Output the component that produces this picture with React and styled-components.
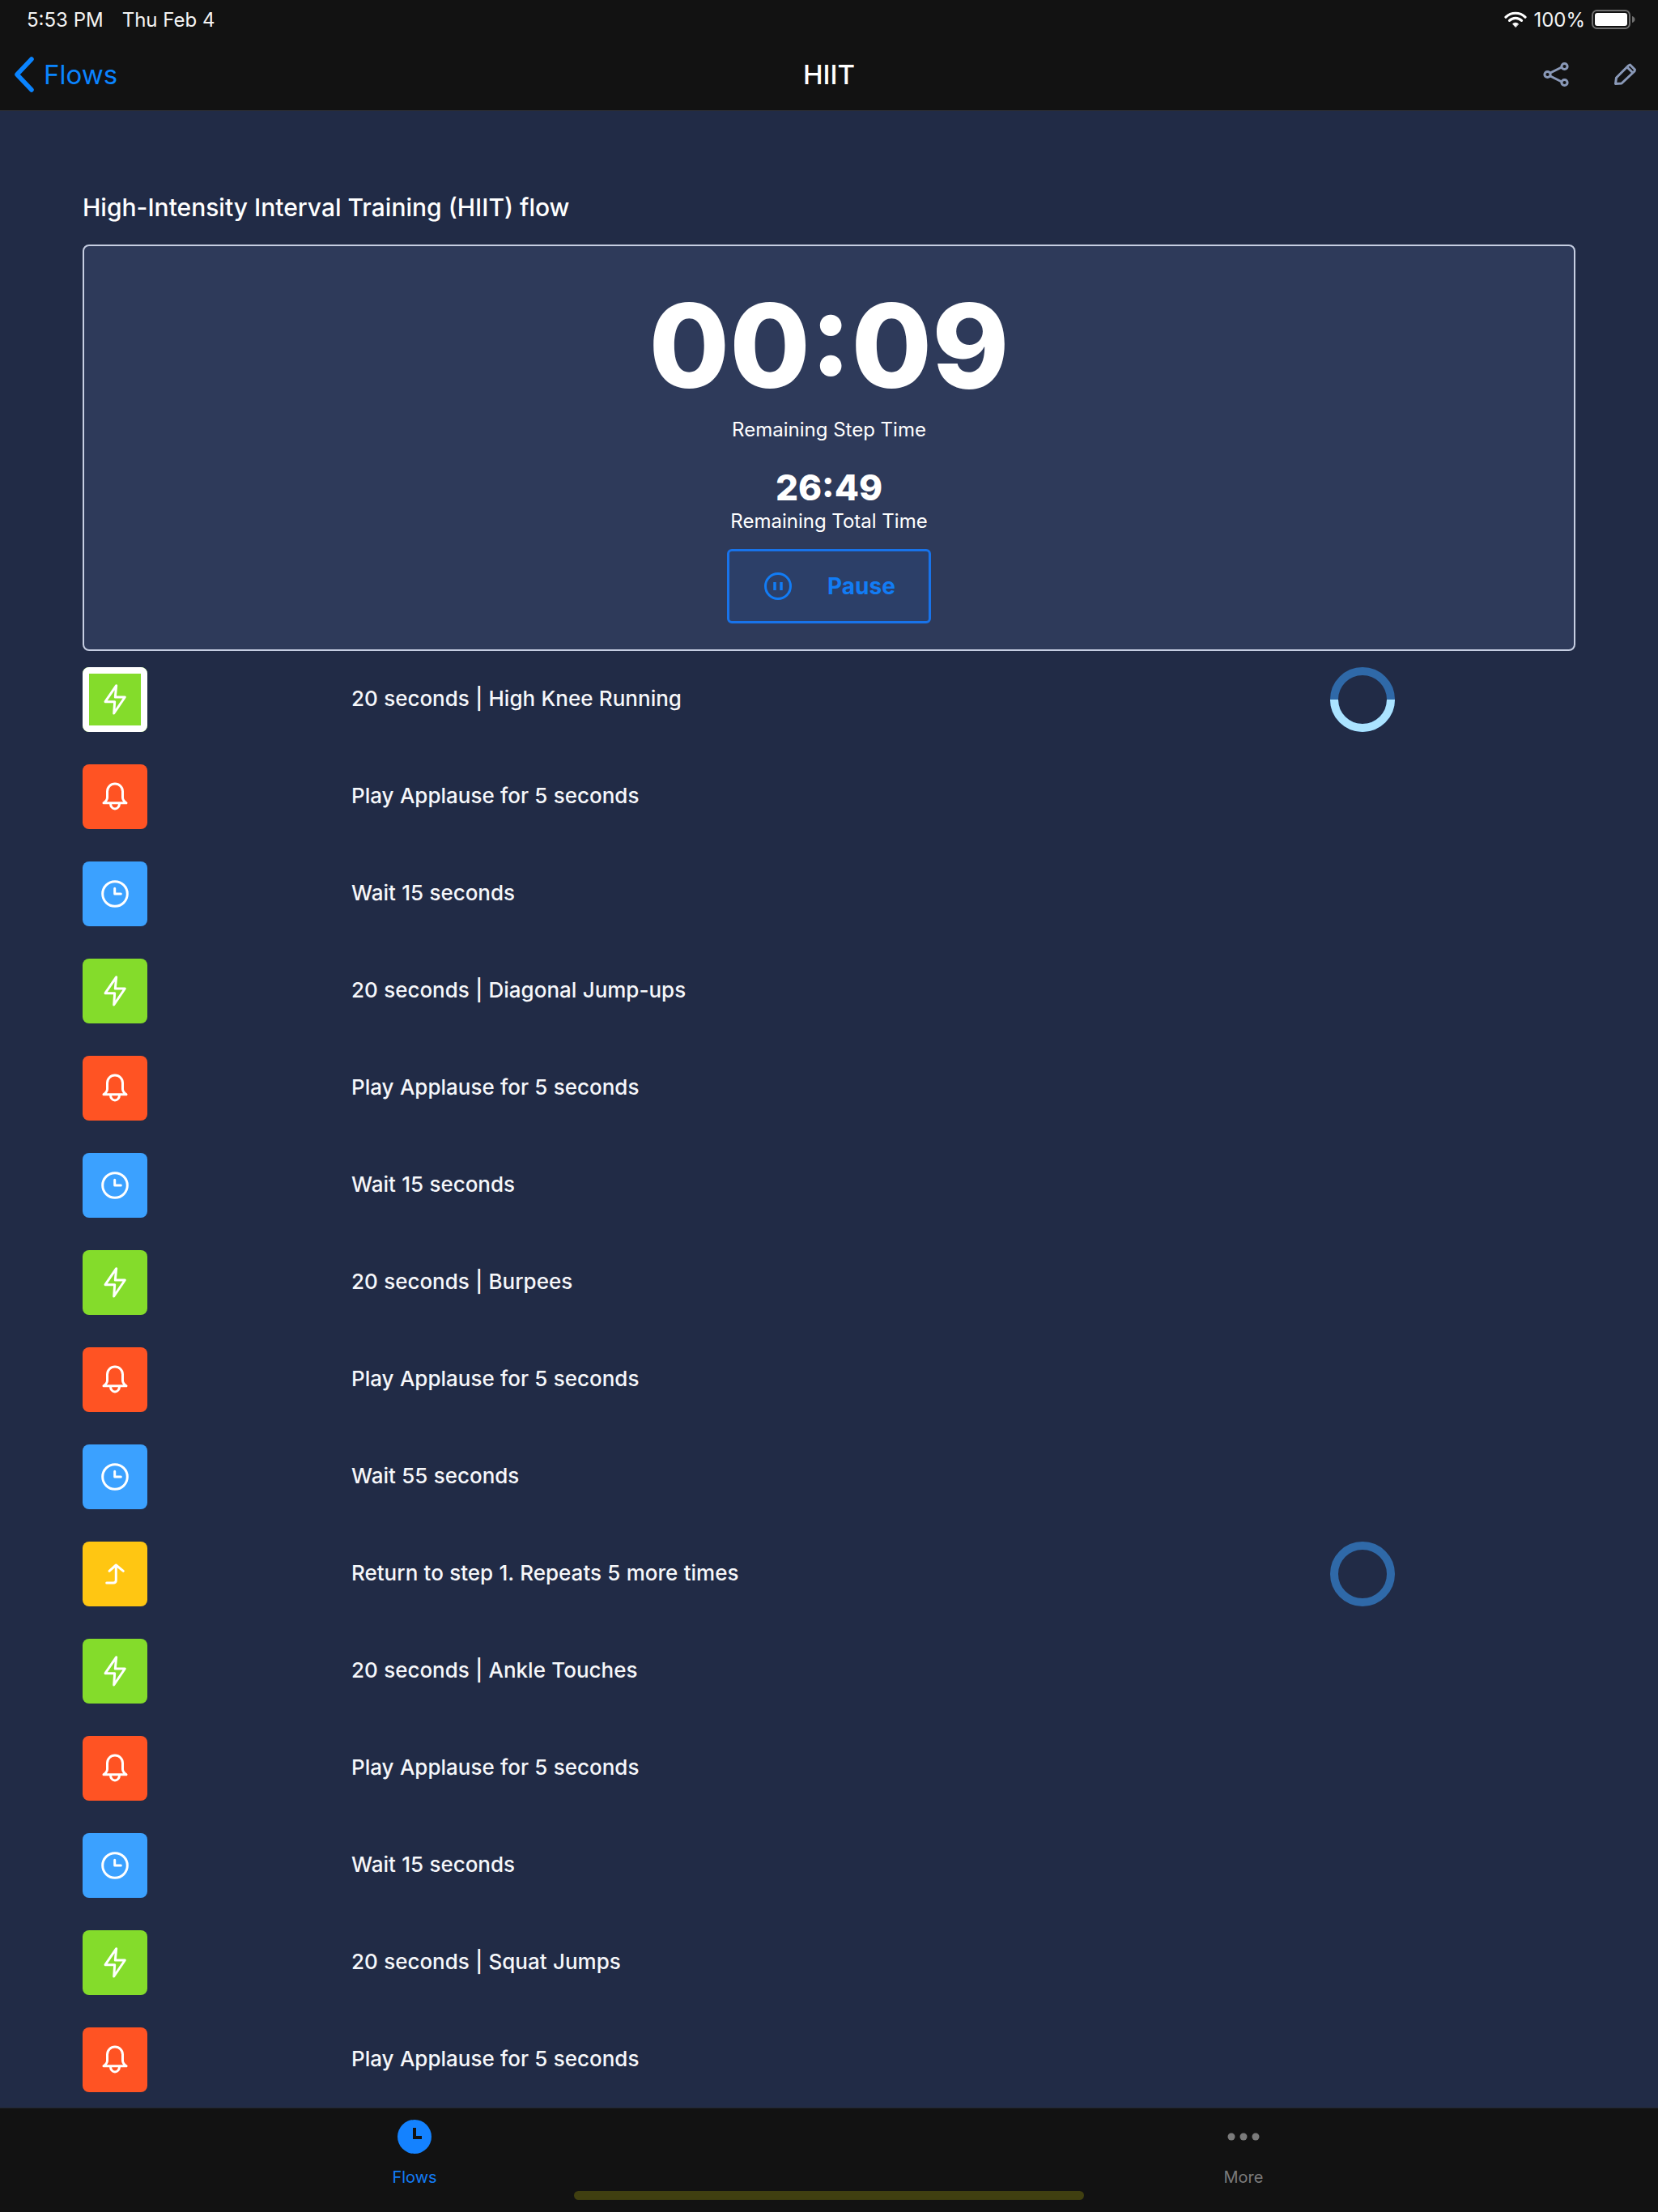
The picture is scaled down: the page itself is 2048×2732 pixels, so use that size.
import React from 'react';
import styled, {createGlobalStyle} from 'styled-components';

const GlobalStyle = createGlobalStyle`
  html, body {
    margin: 0;
    padding: 0;
    background: #121212;
  }
  * {
    box-sizing: border-box;
  }
`;

const Screen = styled.div`
  width: 2048px;
  height: 2732px;
  display: flex;
  flex-direction: column;
  overflow: hidden;
  position: relative;
  background: #212b46;
  color: #fff;
  font-family: Inter, "Liberation Sans", sans-serif;
`;

const Header = styled.header`
  height: 137px;
  flex: none;
  background: #121212;
  border-bottom: 1px solid #2a2c32;
`;

const StatusBar = styled.div`
  height: 48px;
  padding: 0 28px 0 33px;
  display: flex;
  align-items: center;
  justify-content: space-between;
  font-size: 24px;
  color: #f4f4f4;
`;

const StatusGroup = styled.div`
  display: flex;
  align-items: center;
  gap: ${p => p.$gap}px;
`;

const NavBar = styled.nav`
  height: 88px;
  padding: 0 25px;
  display: grid;
  grid-template-columns: 1fr auto 1fr;
  align-items: center;
`;

const BackLink = styled.div`
  display: flex;
  align-items: center;
  gap: 11px;
  margin-left: -8px;
  color: #0a84ff;
  font-size: 33px;
`;

const NavTitle = styled.div`
  font-size: 33px;
  font-weight: 500;
`;

const NavActions = styled.div`
  display: flex;
  justify-content: flex-end;
  align-items: center;
  gap: 53px;
`;

const Main = styled.main`
  flex: 1;
  min-height: 0;
  overflow: hidden;
  padding: 100px 102px 0;
`;

const FlowTitle = styled.h1`
  margin: 0 0 27px;
  font-size: 30px;
  line-height: 38px;
  font-weight: 500;
`;

const TimerCard = styled.section`
  height: 502px;
  padding-top: 53px;
  display: flex;
  flex-direction: column;
  align-items: center;
  background: #2e3a5a;
  border: 2px solid #c6cee2;
  border-radius: 8px;
`;

const StepTime = styled.div`
  font-size: 144px;
  line-height: 140px;
  font-weight: 800;
`;

const TimerLabel = styled.div`
  font-size: 24px;
  line-height: 30px;
  margin-top: ${p => p.$top || 0}px;
`;

const TotalTime = styled.div`
  margin-top: 31px;
  font-size: 44px;
  line-height: 50px;
  font-weight: 800;
`;

const PauseButton = styled.button`
  width: 252px;
  height: 92px;
  margin-top: 19px;
  padding: 0 0 0 42px;
  display: flex;
  align-items: center;
  gap: 43px;
  background: #2c3f68;
  border: 3px solid #1873ea;
  border-radius: 6px;
  color: #127cf5;
  font-family: inherit;
  font-size: 28px;
  font-weight: 700;
`;

const StepRow = styled.div`
  height: 120px;
  display: grid;
  grid-template-columns: 332px 1fr 303px;
  align-items: center;
`;

const StepTile = styled.div`
  width: 80px;
  height: 80px;
  display: flex;
  align-items: center;
  justify-content: center;
  background: ${p => p.$color};
  border-radius: 8px;
  ${p => p.$active && 'outline: 8px solid #fff; outline-offset: -8px;'}
`;

const StepText = styled.div`
  padding-bottom: 3px;
  font-size: 26px;
  font-weight: 500;
  word-spacing: 0.4px;
  color: #f6f7fa;
`;

const TabBar = styled.footer`
  height: 129px;
  flex: none;
  display: grid;
  grid-template-columns: 1fr 1fr;
  padding-top: 14px;
  background: #121212;
  border-top: 1px solid #24262c;
`;

const TabItem = styled.div`
  display: flex;
  flex-direction: column;
  align-items: center;
  color: ${p => p.$color};
  font-size: 20px;
  line-height: 24px;
`;

const TabIcon = styled.div`
  height: 42px;
  margin-bottom: 17px;
  display: flex;
  align-items: center;
`;

const HomeIndicator = styled.div`
  position: absolute;
  left: 709px;
  bottom: 15px;
  width: 630px;
  height: 11px;
  background: #403f10;
  border-radius: 6px;
`;

const WifiIcon = () => (
  <svg width="28" height="22" viewBox="0 0 28 22" fill="none" stroke="#fff" strokeWidth="3.2" strokeLinecap="round">
    <path d="M2 8.2a17 17 0 0 1 24 0" />
    <path d="M6.5 12.4a10.6 10.6 0 0 1 15 0" />
    <path d="M14 20.5l-3.6-3.9a5 5 0 0 1 7.2 0z" fill="#fff" strokeWidth="0.6" strokeLinejoin="round" />
  </svg>
);

const BatteryIcon = () => (
  <svg width="54" height="24" viewBox="0 0 54 24">
    <rect x="1" y="1" width="46" height="22" rx="5.5" fill="none" stroke="#6f6f6f" strokeWidth="2" />
    <rect x="4" y="4" width="40" height="16" rx="3" fill="#fff" />
    <path d="M50 8c2 .4 3.5 2 3.5 4s-1.500 3.600-3.500 4z" fill="#6f6f6f" />
  </svg>
);

const ChevronLeft = () => (
  <svg width="26" height="44" viewBox="0 0 26 44" fill="none" stroke="#0a84ff" strokeWidth="5.500" strokeLinecap="round" strokeLinejoin="round">
    <path d="M22 3L4 22l18 19" />
  </svg>
);

const ShareIcon = () => (
  <svg width="32" height="32" viewBox="0 0 32 32" fill="none" stroke="#8a99b8" strokeWidth="3">
    <path d="M8 14.500L23 7M8 17.500L23 25" />
    <circle cx="5.500" cy="16" r="3.600" />
    <circle cx="26.500" cy="6" r="3.600" />
    <circle cx="26.500" cy="26" r="3.600" />
  </svg>
);

const PencilIcon = () => (
  <svg width="32" height="32" viewBox="0 0 32 32" fill="none" stroke="#8a99b8" strokeWidth="3" strokeLinejoin="round">
    <path d="M4.500 27.500l1-7.500L20.500 5l2-1 6 6-.5 2L12 27z" />
    <path d="M19 7l6.500 6.500" />
  </svg>
);

const PauseIcon = () => (
  <svg width="36" height="36" viewBox="0 0 36 36" fill="none" stroke="#127cf5" strokeWidth="3">
    <circle cx="18" cy="18" r="15.500" />
    <path d="M14 13v10M22 13v10" strokeWidth="3.500" />
  </svg>
);

const glyphs = {
  bolt: <path d="M21.700 2.700L8 22.700h11.700L18.700 37 32.300 17H20.300z" />,
  bell: (
    <>
      <path d="M10.500 13.500a9.500 9.500 0 0 1 19 0V21c0 3 2 5 4.500 6.800H6C8.500 26 10.500 24 10.500 21z" />
      <path d="M14.500 28.500a5.500 6.500 0 0 0 11 0" />
    </>
  ),
  clock: (
    <>
      <circle cx="20" cy="20" r="15.300" />
      <path d="M19.700 13.300V20h7.600" />
    </>
  ),
  loop: <path d="M9.700 31H18q3.300 0 3.300-3.300V10M13 16.300L21.300 9l9 7.300" />
};

const StepIcon = ({kind}) => (
  <svg width="40" height="40" viewBox="0 0 40 40" fill="none" stroke="#fff" strokeWidth="3" strokeLinecap="round" strokeLinejoin="round">
    {glyphs[kind]}
  </svg>
);

const ProgressRing = ({active}) => (
  <svg width="80" height="80" viewBox="0 0 80 80" fill="none" strokeWidth="10">
    <circle cx="40" cy="40" r="35" stroke="#2f69a8" />
    {active && <path d="M5 40a35 35 0 0 0 70 0" stroke="#abe3ff" />}
  </svg>
);

const stepKinds = {
  bolt: '#84dc2b',
  bell: '#ff5323',
  clock: '#3ba1ff',
  loop: '#ffc612'
};

const steps = [
  {kind: 'bolt', text: '20 seconds | High Knee Running', active: true, ring: true},
  {kind: 'bell', text: 'Play Applause for 5 seconds'},
  {kind: 'clock', text: 'Wait 15 seconds'},
  {kind: 'bolt', text: '20 seconds | Diagonal Jump-ups'},
  {kind: 'bell', text: 'Play Applause for 5 seconds'},
  {kind: 'clock', text: 'Wait 15 seconds'},
  {kind: 'bolt', text: '20 seconds | Burpees'},
  {kind: 'bell', text: 'Play Applause for 5 seconds'},
  {kind: 'clock', text: 'Wait 55 seconds'},
  {kind: 'loop', text: 'Return to step 1. Repeats 5 more times', ring: true},
  {kind: 'bolt', text: '20 seconds | Ankle Touches'},
  {kind: 'bell', text: 'Play Applause for 5 seconds'},
  {kind: 'clock', text: 'Wait 15 seconds'},
  {kind: 'bolt', text: '20 seconds | Squat Jumps'},
  {kind: 'bell', text: 'Play Applause for 5 seconds'}
];

const App = () => (
  <Screen>
    <GlobalStyle />
    <Header>
      <StatusBar>
        <StatusGroup $gap={23}>
          <span>5:53 PM</span>
          <span>Thu Feb 4</span>
        </StatusGroup>
        <StatusGroup $gap={8}>
          <WifiIcon />
          <span>100%</span>
          <BatteryIcon />
        </StatusGroup>
      </StatusBar>
      <NavBar>
        <BackLink>
          <ChevronLeft />
          Flows
        </BackLink>
        <NavTitle>HIIT</NavTitle>
        <NavActions>
          <ShareIcon />
          <PencilIcon />
        </NavActions>
      </NavBar>
    </Header>
    <Main>
      <FlowTitle>High-Intensity Interval Training (HIIT) flow</FlowTitle>
      <TimerCard>
        <StepTime>00:09</StepTime>
        <TimerLabel $top={19}>Remaining Step Time</TimerLabel>
        <TotalTime>26:49</TotalTime>
        <TimerLabel $top={2}>Remaining Total Time</TimerLabel>
        <PauseButton>
          <PauseIcon />
          Pause
        </PauseButton>
      </TimerCard>
      {steps.map((step, i) => (
        <StepRow key={i}>
          <StepTile $color={stepKinds[step.kind]} $active={step.active}>
            <StepIcon kind={step.kind} />
          </StepTile>
          <StepText>{step.text}</StepText>
          {step.ring && <ProgressRing active={step.active} />}
        </StepRow>
      ))}
    </Main>
    <TabBar>
      <TabItem $color="#127cf5">
        <TabIcon>
          <svg width="42" height="42" viewBox="0 0 42 42">
            <circle cx="21" cy="21" r="21" fill="#1482ff" />
            <path d="M21 10v12h9" fill="none" stroke="#121212" strokeWidth="4" />
          </svg>
        </TabIcon>
        Flows
      </TabItem>
      <TabItem $color="#7b7b7b">
        <TabIcon>
          <svg width="40" height="10" viewBox="0 0 40 10" fill="#7b7b7b">
            <circle cx="5" cy="5" r="4.500" />
            <circle cx="20" cy="5" r="4.500" />
            <circle cx="35" cy="5" r="4.500" />
          </svg>
        </TabIcon>
        More
      </TabItem>
    </TabBar>
    <HomeIndicator />
  </Screen>
);

export default App;
